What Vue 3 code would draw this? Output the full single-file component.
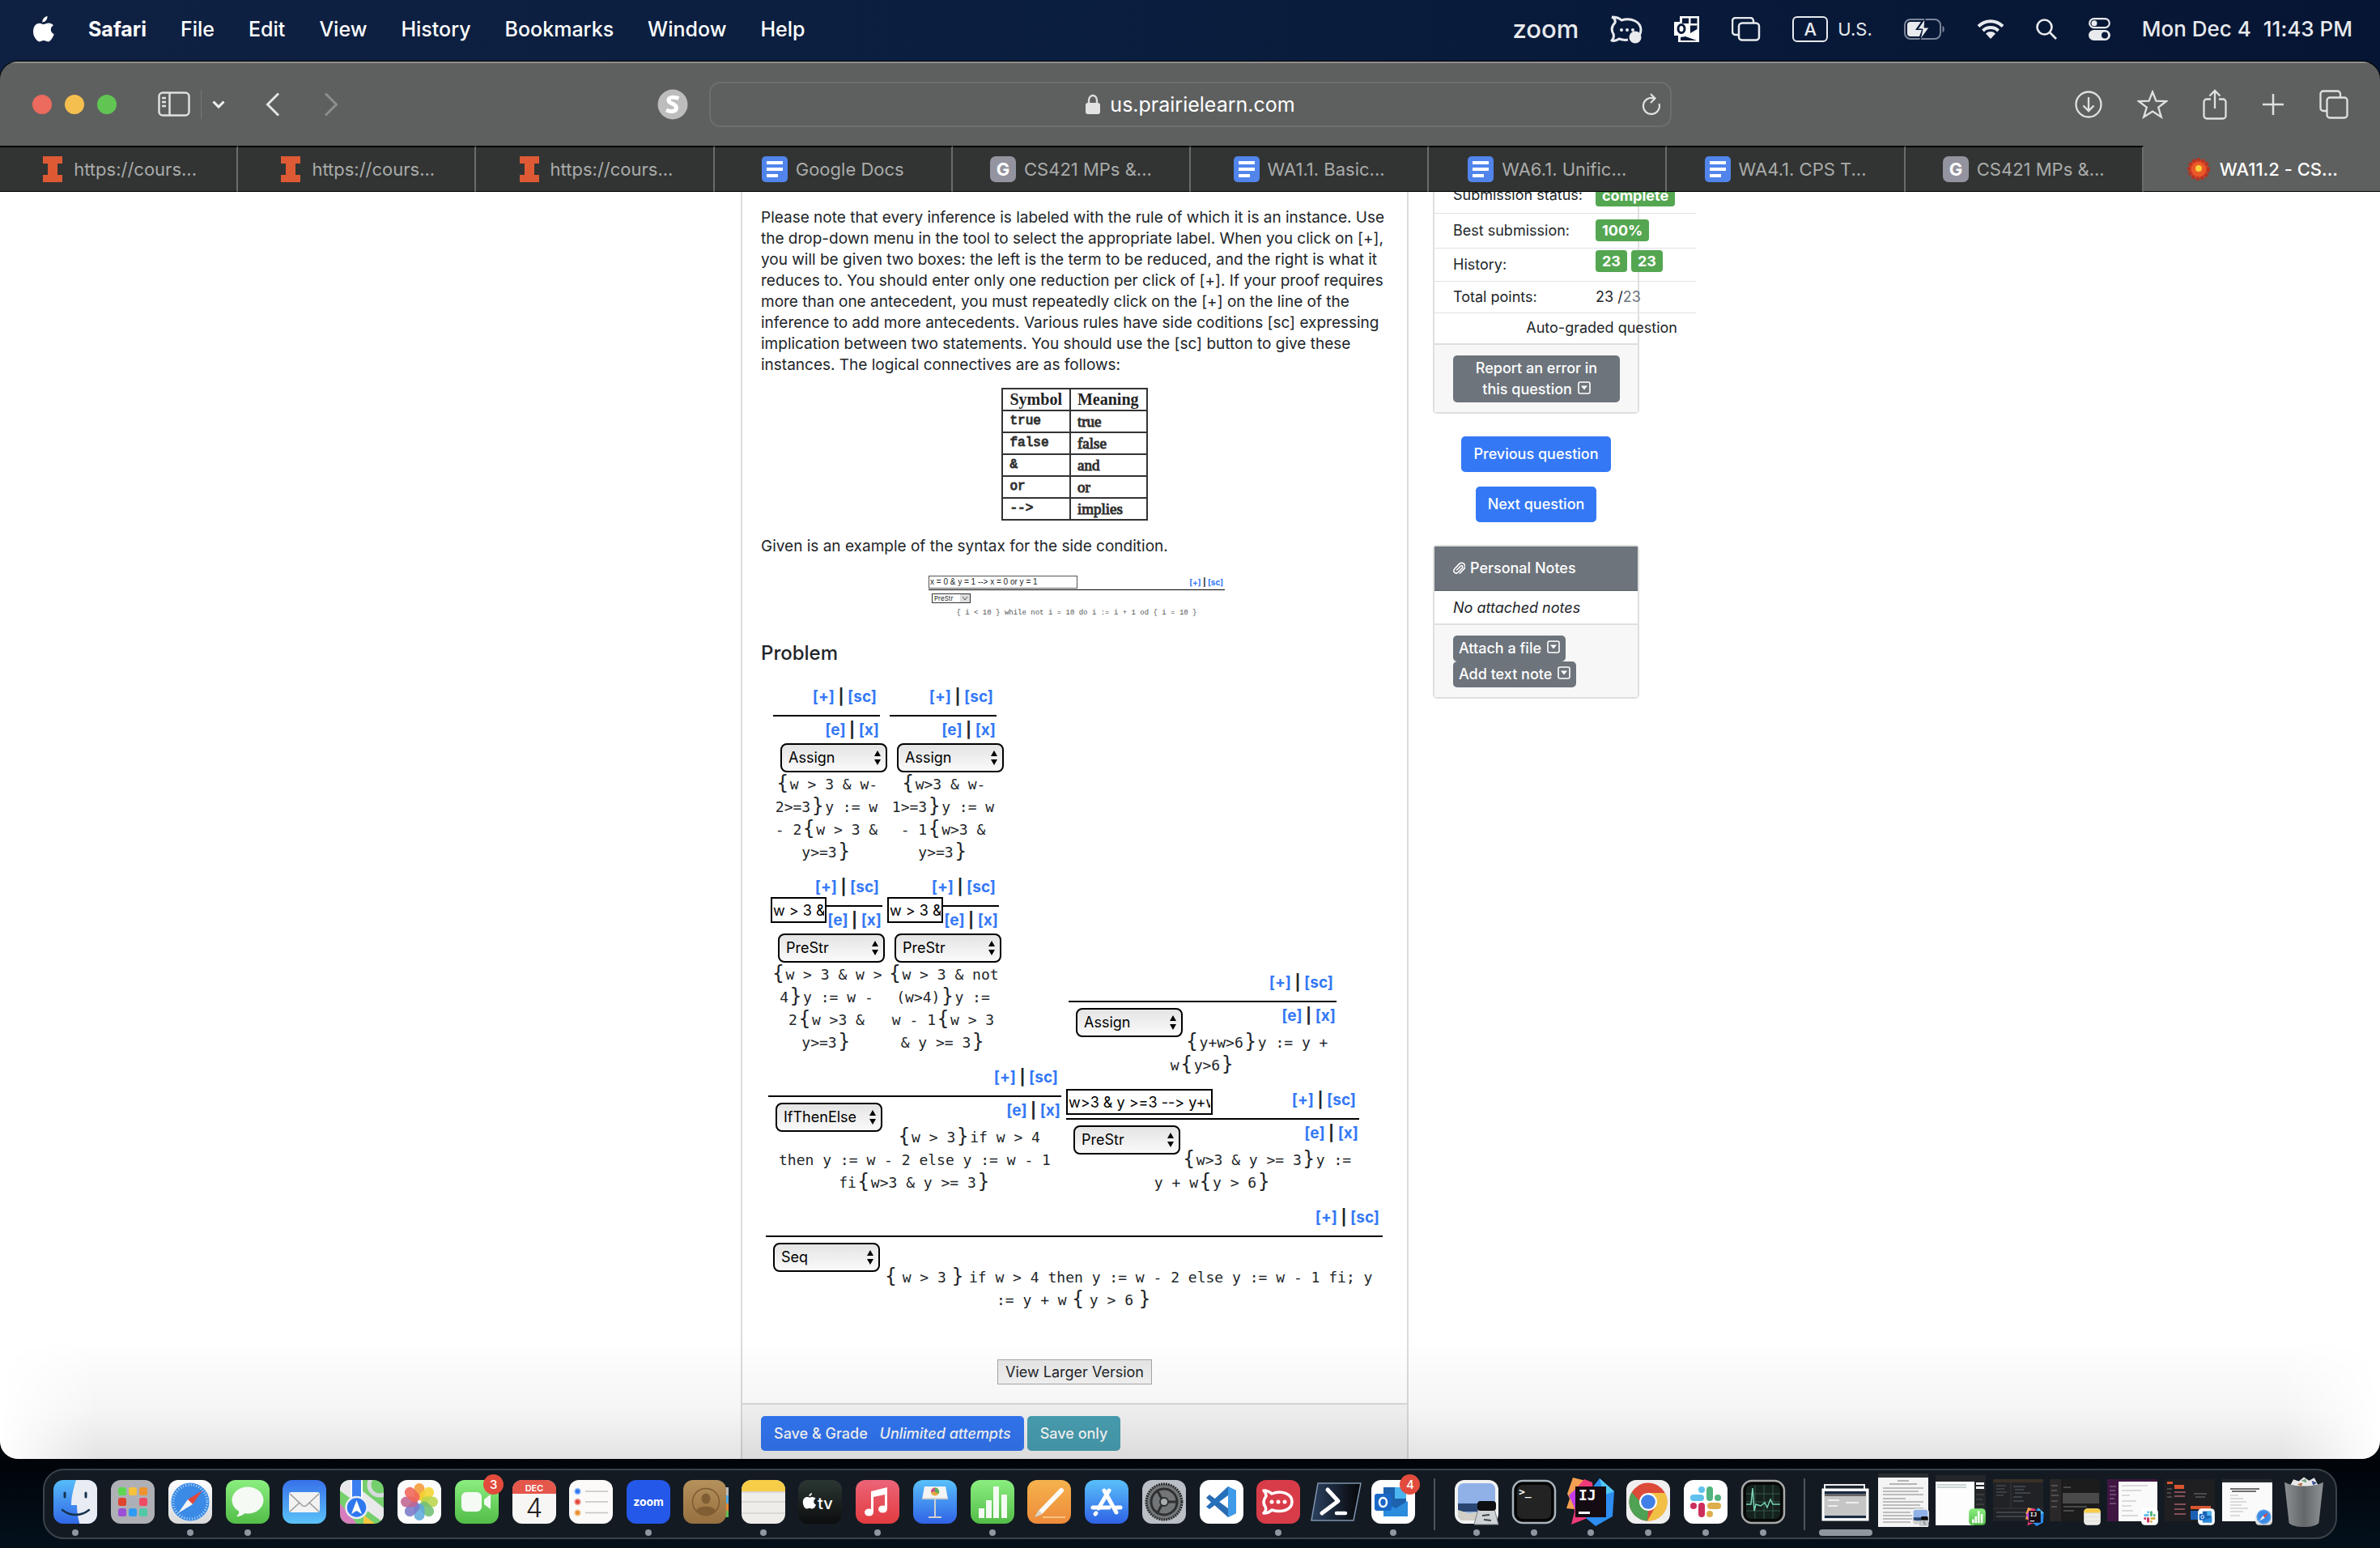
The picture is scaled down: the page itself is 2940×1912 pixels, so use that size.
<script setup>
import { h } from 'vue'

const menus = ['File', 'Edit', 'View', 'History', 'Bookmarks', 'Window', 'Help']

const tabs = [
  { icon: 'illinois', label: 'https://cours...' },
  { icon: 'illinois', label: 'https://cours...' },
  { icon: 'illinois', label: 'https://cours...' },
  { icon: 'doc', label: 'Google Docs' },
  { icon: 'g', label: 'CS421 MPs &...' },
  { icon: 'doc', label: 'WA1.1. Basic...' },
  { icon: 'doc', label: 'WA6.1. Unific...' },
  { icon: 'doc', label: 'WA4.1. CPS T...' },
  { icon: 'g', label: 'CS421 MPs &...' },
  { icon: 'flower', label: 'WA11.2 - CS...', active: true },
]

const connectives = [
  ['true', 'true'],
  ['false', 'false'],
  ['&', 'and'],
  ['or', 'or'],
  ['-->', 'implies'],
]

const proof = {
  rule: 'Seq',
  size: 'root',
  lines: ['{ w > 3 } if w > 4 then y := w - 2 else y := w - 1 fi; y', ':= y + w { y > 6 }'],
  premises: [
    {
      rule: 'IfThenElse',
      size: 'wide',
      edit: true,
      lines: ['{w > 3}if w > 4', 'then y := w - 2 else y := w - 1', 'fi{w>3 & y >= 3}'],
      premises: [
        {
          rule: 'PreStr',
          size: 'slim',
          edit: true,
          side: 'w > 3 & w > 4 --> w > 3 & w-2>=3',
          lines: ['{w > 3 & w >', '4}y := w -', '2{w >3 &', 'y>=3}'],
          premises: [
            { rule: 'Assign', size: 'slim', edit: true, lines: ['{w > 3 & w-', '2>=3}y := w', '- 2{w > 3 &', 'y>=3}'] },
          ],
        },
        {
          rule: 'PreStr',
          size: 'slim',
          edit: true,
          side: 'w > 3 & not (w>4) --> w>3 & w-1>=3',
          lines: ['{w > 3 & not', '(w>4)}y :=', 'w - 1{w > 3', '& y >= 3}'],
          premises: [
            { rule: 'Assign', size: 'slim', edit: true, lines: ['{w>3 & w-', '1>=3}y := w', '- 1{w>3 &', 'y>=3}'] },
          ],
        },
      ],
    },
    {
      rule: 'PreStr',
      size: 'wide',
      edit: true,
      side: 'w>3 & y >=3 --> y+w>6',
      lines: ['{w>3 & y >= 3}y :=', 'y + w{y > 6}'],
      premises: [
        { rule: 'Assign', size: 'wide', edit: true, lines: ['{y+w>6}y := y +', 'w{y>6}'] },
      ],
    },
  ],
}

const rules = ['Assign', 'PreStr', 'PostWeak', 'Seq', 'IfThenElse', 'While']

function link(label) {
  return h('a', { href: '#' }, label)
}

// Braces are set larger than the code around them; spaces next to a brace are narrow.
function codeLine(text) {
  return text.split(/( ?[{}] ?)/).filter(Boolean).map((part) => {
    if (!/[{}]/.test(part)) return part
    return [
      part.startsWith(' ') ? h('span', { class: 'thin' }, ' ') : null,
      h('span', { class: 'brace' }, part.trim()),
      part.endsWith(' ') ? h('span', { class: 'thin' }, ' ') : null,
    ]
  })
}

function ProofNode(props) {
  const n = props.node
  return h('div', { class: ['node', n.size] }, [
    n.premises
      ? h('div', { class: 'premises' }, n.premises.map((p) => h(ProofNode, { node: p })))
      : null,
    h('div', { class: 'head' }, [
      n.side ? h('input', { class: 'side', value: n.side, 'aria-label': 'Side condition' }) : null,
      h('div', { class: 'links' }, [link('[+]'), ' | ', link('[sc]')]),
    ]),
    h('div', { class: 'body' }, [
      n.edit ? h('div', { class: 'links edit' }, [link('[e]'), ' | ', link('[x]')]) : null,
      h('span', { class: 'pick' }, [
        h('select', { 'aria-label': 'Rule', value: n.rule },
          rules.map((r) => h('option', { value: r, selected: r === n.rule }, r))),
        h('svg', { viewBox: '0 0 8 18', width: 8, height: 18 }, [
          h('path', { d: 'M0 7L4 0L8 7ZM0 11L4 18L8 11Z' }),
        ]),
      ]),
      h('p', { class: 'code' }, n.lines.map((l, i) => [i ? h('br') : null, codeLine(l)])),
    ]),
  ])
}
ProofNode.props = ['node']

function CaretBox() {
  return h('svg', { class: 'caret', viewBox: '0 0 16 16', width: 16, height: 16 }, [
    h('rect', { x: 1, y: 1, width: 14, height: 14, rx: 2, fill: 'none', stroke: 'currentColor', 'stroke-width': 1.6 }),
    h('path', { d: 'M4 5.5H12L8 10.5Z', fill: 'currentColor' }),
  ])
}

const petals = [
  ['#f59a36', 0], ['#f4d431', 45], ['#b9d54a', 90], ['#6fbf73', 135],
  ['#5fa8dc', 180], ['#7b79c9', 225], ['#c0648f', 270], ['#f0655a', 315],
]
const pads = ['#5fd651', '#f5c23c', '#ef9230', '#e0432f', '#aab0b6', '#ee4a63', '#9a4fd6', '#2f9bf5', '#52c9a6']
const windows = [
  { kind: 'paper', badge: 'preview' },
  { kind: 'sheet', badge: 'numbers' },
  { kind: 'ide', badge: 'ij' },
  { kind: 'notes', badge: 'notes' },
  { kind: 'slack', badge: 'slack' },
  { kind: 'mail', badge: 'outlook' },
  { kind: 'essay', badge: 'safari' },
]
</script>

<template>
  <div class="screen">
    <header class="menubar">
      <nav class="menus">
        <svg class="apple" viewBox="0 0 26 32" width="26" height="32"><path fill="#fff" d="M17.5 0c.3 2-.6 4-1.700 5.300C14.600 6.700 12.900 7.600 11.300 7.500c-.2-2 .7-3.900 1.800-5.100C14.300 1 16.100.1 17.500 0ZM25 11.200c-2 1.200-3.200 3-3.200 5.300 0 2.700 1.600 4.800 4 5.700-.5 1.700-1.400 3.500-2.600 5.200-1.400 2-2.800 4-5 4-2.100 0-2.700-1.300-5.200-1.300-2.400 0-3.200 1.300-5.200 1.300-2.200 0-3.800-2.200-5.200-4.200C.7 24.600-.3 21.300.1 17.600.5 12 4 8.700 7.800 8.700c2.200 0 3.900 1.400 5.300 1.400 1.300 0 3.400-1.600 6.100-1.500 2 0 4.300.8 5.800 2.600Z"/></svg>
        <b>Safari</b>
        <span v-for="m in menus" :key="m">{{ m }}</span>
      </nav>
      <div class="status">
        <span class="zoomword">zoom</span>
        <svg viewBox="0 0 40 36" width="40" height="36"><path fill="none" stroke="#e8eaee" stroke-width="3" stroke-linejoin="round" d="M2 3c5 0 9 1 12 4 12-4 24 2 24 12 0 3-1 5-2 7M22 31c-4 1-8 0-11-1-3 2-6 3-9 2 3-3 3-5 2-8-3-5-2-10 2-14 1-3 0-5-4-7"/><g fill="#e8eaee"><circle cx="14" cy="19" r="2"/><circle cx="21" cy="19" r="2"/><circle cx="28" cy="19" r="2"/><circle cx="31" cy="28" r="7.500"/></g></svg>
        <svg viewBox="0 0 32 34" width="32" height="34"><path fill="#fff" d="M7 1H31V33H5V25H0V8H7Z"/><path fill="#081838" d="M10 3.500H28.500V17L20 22V10H10ZM8 27L14 26L28 31H8Z"/><path fill="#fff" d="M18 3H20.500V10H28.500V12.500H18Z"/><ellipse cx="9" cy="16.500" rx="4" ry="5" fill="none" stroke="#081838" stroke-width="3"/></svg>
        <svg viewBox="0 0 36 30" width="36" height="30" fill="none" stroke="#e8eaee" stroke-width="2.500"><path d="M8 22H5a4 4 0 0 1-4-4V5a4 4 0 0 1 4-4H23a4 4 0 0 1 4 4V7"/><rect x="9" y="7.500" width="25" height="21" rx="4"/></svg>
        <span class="lang"><i>A</i>U.S.</span>
        <svg viewBox="0 0 51 26" width="51" height="26"><rect x="1" y="1" width="44" height="24" rx="7" fill="none" stroke="#7c869a" stroke-width="2"/><path d="M47.500 9c3 1 3 7 0 8Z" fill="#7c869a"/><path fill="#e8eaee" d="M8 4H21L14 14H22L19 22H8a4 4 0 0 1-4-4V8a4 4 0 0 1 4-4Z"/><path fill="#e8eaee" d="M26 0L17 13H23L20 26L31 11H25Z" stroke="#081838"/></svg>
        <svg viewBox="0 0 34 26" width="34" height="26" fill="none" stroke="#e8eaee" stroke-width="4"><path d="M2 9.500a21 21 0 0 1 30 0M7.500 15a13.500 13.500 0 0 1 19 0"/><path fill="#e8eaee" stroke="none" d="M11 18.500a8.500 8.500 0 0 1 12 0L17 25Z"/></svg>
        <svg viewBox="0 0 26 26" width="26" height="26" fill="none" stroke="#e8eaee" stroke-width="2.600"><circle cx="10.500" cy="10.500" r="9"/><path d="M17 17L25 25"/></svg>
        <svg viewBox="0 0 27 28" width="27" height="28"><rect x="1.200" y="1.200" width="24.600" height="11" rx="5.500" fill="none" stroke="#e8eaee" stroke-width="2.200"/><circle cx="7" cy="6.700" r="3.500" fill="#e8eaee"/><rect y="15" width="27" height="13" rx="6.500" fill="#e8eaee"/><circle cx="20" cy="21.500" r="4" fill="#081838"/></svg>
        <span class="clock"><span>Mon Dec 4</span><span>11:43 PM</span></span>
      </div>
    </header>

    <section class="browser">
      <div class="toolbar">
        <div class="left">
          <span class="light red"></span><span class="light amber"></span><span class="light green"></span>
          <button class="tool side-tool" aria-label="Sidebar"><svg viewBox="0 0 40 32" width="40" height="32" fill="none" stroke="#dfe0df" stroke-width="2.500"><rect x="1.500" y="1.500" width="37" height="28" rx="4.500"/><path d="M14.500 1V30M5 8H10M5 13H10M5 18H10"/></svg></button>
          <span class="bar"></span>
          <button class="tool down" aria-label="Tab groups"><svg viewBox="0 0 16 10" width="16" height="10" fill="none" stroke="#f0f0f0" stroke-width="3"><path d="M1.500 1.500L8 8L14.500 1.500"/></svg></button>
          <button class="tool back" aria-label="Back"><svg viewBox="0 0 18 30" width="18" height="30" fill="none" stroke="#e4e4e4" stroke-width="3"><path d="M16 1.500L2.500 15L16 28.500"/></svg></button>
          <button class="tool fwd" aria-label="Forward"><svg viewBox="0 0 18 30" width="18" height="30" fill="none" stroke="#8c8e8d" stroke-width="3"><path d="M2 1.500L15.500 15L2 28.500"/></svg></button>
          <span class="ext"><svg viewBox="0 0 38 38" width="38" height="38"><circle cx="19" cy="19" r="18.500" fill="#bdbdbd"/><path fill="none" stroke="#fff" stroke-width="5" d="M26.500 11.500c-7-2.500-13-1.500-12.500 3 .4 3.500 9.500 4 9.500 8.500 0 5-6.500 5.500-12.500 3"/></svg></span>
        </div>
        <div class="address">
          <svg viewBox="0 0 18 26" width="18" height="26"><path d="M4 12V8a5 6 0 0 1 10 0v4" fill="none" stroke="#dcdcdc" stroke-width="2.400"/><rect y="11" width="18" height="14" rx="3" fill="#e2e2e2"/></svg>
          <span>us.prairielearn.com</span>
          <button class="tool reload" aria-label="Reload"><svg viewBox="0 0 24 28" width="24" height="28" fill="none" stroke="#dfe0df" stroke-width="2.200"><path d="M21.500 13A10 10 0 1 1 15 6.400M11 1L16.500 6.500L11 12"/></svg></button>
        </div>
        <div class="right">
          <button class="tool" aria-label="Downloads"><svg viewBox="0 0 34 34" width="34" height="34" fill="none" stroke="#dfe0df" stroke-width="2.300"><circle cx="17" cy="17" r="15.500"/><path d="M17 8V25M10.500 18.500L17 25L23.500 18.500"/></svg></button>
          <button class="tool" aria-label="Bookmark"><svg viewBox="0 0 38 36" width="38" height="36" fill="none" stroke="#dfe0df" stroke-width="2.300"><path d="M19 2.500L23.400 13.700L36 14L26.200 21.700L29.800 33.500L19 26.500L8.200 33.500L11.800 21.700L2 14L14.600 13.700Z"/></svg></button>
          <button class="tool" aria-label="Share"><svg viewBox="0 0 30 38" width="30" height="38" fill="none" stroke="#dfe0df" stroke-width="2.300"><path d="M10 12.500H5A3.500 3.500 0 0 0 1.500 16V33A3.500 3.500 0 0 0 5 36.500H25A3.500 3.500 0 0 0 28.500 33V16A3.500 3.500 0 0 0 25 12.500H20M15 24V2M8.500 8.500L15 2L21.500 8.500"/></svg></button>
          <button class="tool" aria-label="New tab"><svg viewBox="0 0 28 28" width="28" height="28" stroke="#dfe0df" stroke-width="2.500"><path d="M14 1V27M1 14H27"/></svg></button>
          <button class="tool" aria-label="Tab overview"><svg viewBox="0 0 36 36" width="36" height="36" fill="none" stroke="#dfe0df" stroke-width="2.300"><path d="M9 26H5A3.500 3.500 0 0 1 1.500 22.500V5A3.500 3.500 0 0 1 5 1.500H22.500A3.500 3.500 0 0 1 26 5V9"/><rect x="9.500" y="9.500" width="25" height="25" rx="3.500"/></svg></button>
        </div>
      </div>
      <div class="tabs">
        <button v-for="(t, i) in tabs" :key="i" class="tab" :class="{ active: t.active }">
          <svg v-if="t.icon === 'illinois'" viewBox="0 0 32 32" width="32" height="32"><path fill="#dd5a35" d="M4 0H28V9H22V23H28V32H4V23H10V9H4Z"/></svg>
          <svg v-else-if="t.icon === 'doc'" viewBox="0 0 32 32" width="32" height="32"><rect width="32" height="32" rx="5" fill="#5185ec"/><path fill="#fff" d="M6 6H26V10H6ZM6 14H26V18H6ZM6 22H20V26H6Z"/></svg>
          <svg v-else-if="t.icon === 'g'" viewBox="0 0 32 32" width="32" height="32"><rect width="32" height="32" rx="7" fill="#9494a0"/><text x="16" y="24" text-anchor="middle" font-family="Inter, sans-serif" font-weight="700" font-size="22" fill="#fff">G</text></svg>
          <svg v-else viewBox="0 0 32 32" width="32" height="32"><circle cx="16" cy="16" r="12" fill="#d8402a" stroke="#b23523" stroke-width="4" stroke-dasharray="4 2"/><circle cx="16" cy="16" r="9" fill="#ea5a26"/><circle cx="16" cy="15" r="4" fill="#f6cf3c"/></svg>
          <span>{{ t.label }}</span>
        </button>
      </div>

      <main class="page">
        <div class="layout">
          <article class="question">
            <div class="content">
              <p>Please note that every inference is labeled with the rule of which it is an instance. Use<br>the drop-down menu in the tool to select the appropriate label. When you click on [+],<br>you will be given two boxes: the left is the term to be reduced, and the right is what it<br>reduces to. You should enter only one reduction per click of [+]. If your proof requires<br>more than one antecedent, you must repeatedly click on the [+] on the line of the<br>inference to add more antecedents. Various rules have side coditions [sc] expressing<br>implication between two statements. You should use the [sc] button to give these<br>instances. The logical connectives are as follows:</p>
              <table class="connectives">
                <thead><tr><th>Symbol</th><th>Meaning</th></tr></thead>
                <tbody><tr v-for="c in connectives" :key="c[0]"><td class="sym">{{ c[0] }}</td><td>{{ c[1] }}</td></tr></tbody>
              </table>
              <p class="given">Given is an example of the syntax for the side condition.</p>
              <div class="example">
                <div class="ex-top">
                  <span class="ex-input">x = 0 &amp; y = 1 --&gt; x = 0 or y = 1</span>
                  <span class="ex-links"><i>[+]</i> | <i>[sc]</i></span>
                </div>
                <div class="ex-select"><span>PreStr</span><svg viewBox="0 0 12 10" width="12" height="10"><rect width="12" height="10" fill="#ddd"/><path d="M3 3L6 7L9 3" fill="none" stroke="#555"/></svg></div>
                <div class="ex-code">{ i &lt; 10 } while not i = 10 do i := i + 1 od { i = 10 }</div>
              </div>
              <h2>Problem</h2>
              <div class="proof"><ProofNode :node="proof" /></div>
              <button class="larger">View Larger Version</button>
            </div>
            <footer class="actions">
              <button class="btn blue">Save &amp; Grade <em>Unlimited attempts</em></button>
              <button class="btn teal">Save only</button>
            </footer>
          </article>

          <aside>
            <section class="card score">
              <table>
                <tbody>
                  <tr class="r1"><td>Submission status:</td><td><span class="badge">complete</span></td></tr>
                  <tr class="r1"><td>Best submission:</td><td><span class="badge">100%</span></td></tr>
                  <tr class="r2"><td>History:</td><td><span class="badge">23</span><span class="badge">23</span></td></tr>
                  <tr class="r3"><td>Total points:</td><td>23 /<span class="muted">23</span></td></tr>
                  <tr class="r4"><td colspan="2">Auto-graded question</td></tr>
                </tbody>
              </table>
              <div class="foot"><button class="btn gray report">Report an error in<br>this question <CaretBox /></button></div>
            </section>
            <div class="nav">
              <button class="btn blue">Previous question</button>
              <button class="btn blue">Next question</button>
            </div>
            <section class="card notes">
              <h3><svg viewBox="0 0 16 18" width="16" height="18" fill="none" stroke="#fff" stroke-width="1.600"><path d="M5 11.500L10.500 6a1.500 1.500 0 0 1 2 2.200L7 14a3 3 0 0 1-4.300-4.200L8.500 3.600a4 4 0 0 1 6 6L9 15.500"/></svg>Personal Notes</h3>
              <p>No attached notes</p>
              <div class="foot">
                <button class="btn gray">Attach a file <CaretBox /></button>
                <button class="btn gray">Add text note <CaretBox /></button>
              </div>
            </section>
          </aside>
        </div>
        <div class="shade"></div>
      </main>
    </section>

    <svg class="defs" width="0" height="0">
      <defs>
        <linearGradient id="gBlue" x2="0" y2="1"><stop stop-color="#59c0fa"/><stop offset="1" stop-color="#2f62e6"/></linearGradient>
        <linearGradient id="gMail" x2="0" y2="1"><stop stop-color="#3771ea"/><stop offset="1" stop-color="#5cc3f9"/></linearGradient>
        <linearGradient id="gGreen" x2="0" y2="1"><stop stop-color="#8bee80"/><stop offset="1" stop-color="#52bd47"/></linearGradient>
        <linearGradient id="gRed" x2="0" y2="1"><stop stop-color="#ec6478"/><stop offset="1" stop-color="#e23b3f"/></linearGradient>
        <linearGradient id="gOrange" x2="0" y2="1"><stop stop-color="#f5b24d"/><stop offset="1" stop-color="#ee8b3a"/></linearGradient>
        <linearGradient id="gWhite" x2="0" y2="1"><stop stop-color="#fff"/><stop offset="1" stop-color="#d9d9d9"/></linearGradient>
        <linearGradient id="gBrown" x2="0" y2="1"><stop stop-color="#b5915c"/><stop offset="1" stop-color="#96703f"/></linearGradient>
        <linearGradient id="gTv" x2="0" y2="1"><stop stop-color="#2b3733"/><stop offset="1" stop-color="#0c0d0e"/></linearGradient>
        <linearGradient id="gPs" x1="0" y1="0" x2="1" y2="0"><stop stop-color="#2c4160"/><stop offset="1" stop-color="#050607"/></linearGradient>
        <linearGradient id="gCan" x2="1" y2="0"><stop stop-color="#8c9092"/><stop offset=".5" stop-color="#63676a"/><stop offset="1" stop-color="#8e9294"/></linearGradient>
        <clipPath id="tile"><rect x="3" y="3" width="54" height="54" rx="12"/></clipPath>
        <symbol id="i-safari" viewBox="0 0 60 60"><rect x="3" y="3" width="54" height="54" rx="12" fill="url(#gWhite)"/><circle cx="30" cy="30" r="23.500" fill="#3a8ae6"/><circle cx="30" cy="30" r="21" fill="none" stroke="#b9d9f7" stroke-width="3" stroke-dasharray="1 2.300"/><path d="M45 16L33 33L27 27Z" fill="#e2473c"/><path d="M15 44L27 27L33 33Z" fill="#f3f3f3"/></symbol>
        <symbol id="i-notes" viewBox="0 0 60 60"><g clip-path="url(#tile)"><rect width="60" height="60" fill="#efedea"/><rect width="60" height="17" fill="#f7cd48"/><path d="M0 18H60M0 30H60M0 44H60" stroke="#c5c3bf"/></g></symbol>
        <symbol id="i-numbers" viewBox="0 0 60 60"><rect x="3" y="3" width="54" height="54" rx="12" fill="url(#gGreen)"/><path fill="#f4fbf3" d="M13 38h7v12h-7ZM22 28h7v22h-7ZM31 11h7v39h-7ZM41 21h7v29h-7Z"/></symbol>
        <symbol id="i-outlook" viewBox="0 0 60 60"><rect x="3" y="3" width="54" height="54" rx="12" fill="#fff"/><path fill="#1c62ad" d="M18 12H46V48H18Z"/><path fill="#4cb4ee" d="M32 12H46V26H32Z"/><path fill="#2b8bdd" d="M18 29L33 38L48 29V48H18Z"/><rect x="7" y="20" width="21" height="21" rx="3" fill="#1a68c6"/><ellipse cx="17.500" cy="30.500" rx="4.500" ry="5.500" fill="none" stroke="#fff" stroke-width="2.500"/></symbol>
        <symbol id="i-slack" viewBox="0 0 60 60"><rect x="3" y="3" width="54" height="54" rx="12" fill="#fff"/><g stroke-width="8" stroke-linecap="round"><path stroke="#60c1ec" d="M15 25H24M25 15V15.100"/><path stroke="#51b37e" d="M35 15V25M45 25V25.100"/><path stroke="#ddae4b" d="M36 35H45M35 45V45.100"/><path stroke="#cc2f5b" d="M25 35V45M15 35V35.100"/></g></symbol>
        <symbol id="i-ij" viewBox="0 0 60 60"><path fill="#f4a052" d="M8 0L24 4L18 40L0 38L4 26L1 20Z"/><path fill="#ee3a78" d="M8 18L22 2L32 6L36 46L6 58L10 42Z"/><path fill="#c23bea" d="M3 22L16 10L14 46Z"/><path fill="#2d8df0" d="M41 1L59 17L57 48L36 60L24 50L34 10Z"/><path fill="#53c8f7" d="M41 1L59 17L46 22Z"/><rect x="11" y="11" width="38" height="38" fill="#150b12"/><text x="15" y="28" font-family="'DejaVu Sans Mono', monospace" font-weight="700" font-size="18" fill="#fff">IJ</text><path fill="#fff" d="M15 42H29V45H15Z"/></symbol>
        <symbol id="i-preview" viewBox="0 0 60 60"><rect x="3" y="3" width="54" height="54" rx="12" fill="#f2f2f2"/><rect x="7" y="7" width="46" height="46" rx="7" fill="#8fb1e8"/><path fill="#2b4573" d="M7 32H53V42H7Z"/><path fill="#d2cfc6" d="M7 40L20 44L53 40V46a7 7 0 0 1-7 7H14a7 7 0 0 1-7-7Z"/><path fill="#cdd3d6" stroke="#787f84" d="M32 39H52L57 58H27Z"/><rect x="31" y="29" width="23" height="12" rx="4" fill="#0e0f10"/><path stroke="#444" stroke-width="2" d="M37 47L46 46M39 52L48 53"/></symbol>
      </defs>
    </svg>

    <footer class="desktop">
      <div class="dock">
        <div class="app run"><svg viewBox="0 0 60 60"><g clip-path="url(#tile)"><rect width="60" height="60" fill="url(#gBlue)"/><path fill="#e9edf3" d="M32 0C28 12 25 24 25 34H32C32 44 34 52 36 60H60V0Z"/></g><path d="M17 19V24M43 19V24" stroke="#17334f" stroke-width="3" stroke-linecap="round"/><path d="M14 40C24 48 37 48 47 40" fill="none" stroke="#17334f" stroke-width="2.500" stroke-linecap="round"/></svg></div>
        <div class="app"><svg viewBox="0 0 60 60"><rect x="3" y="3" width="54" height="54" rx="12" fill="#aeb0b6"/><rect v-for="(c, i) in pads" :key="i" :x="12 + (i % 3) * 13" :y="12 + Math.floor(i / 3) * 13" width="10" height="10" rx="2.500" :fill="c"/></svg></div>
        <div class="app run"><svg viewBox="0 0 60 60"><use href="#i-safari"/></svg></div>
        <div class="app run"><svg viewBox="0 0 60 60"><rect x="3" y="3" width="54" height="54" rx="12" fill="url(#gGreen)"/><ellipse cx="30" cy="28" rx="19.500" ry="16.500" fill="#f5faf5"/><path fill="#f5faf5" d="M19 40C20 44 18 46 16 48C21 48 25 46 27 43Z"/></svg></div>
        <div class="app"><svg viewBox="0 0 60 60"><rect x="3" y="3" width="54" height="54" rx="12" fill="url(#gMail)"/><rect x="11" y="18" width="38" height="25" rx="3" fill="#f2f2f2"/><path d="M12 20L27 34Q30 37 33 34L48 20M12 42L24 31M48 42L36 31" fill="none" stroke="#9a9a9a" stroke-width="1.500"/></svg></div>
        <div class="app"><svg viewBox="0 0 60 60"><g clip-path="url(#tile)"><rect width="60" height="60" fill="#76cf6d"/><path fill="#e9e9ec" d="M0 14L60 58V40L30 16V0H0Z"/><path fill="#d77dbd" d="M0 28L26 60H0Z"/><path fill="#f3c841" d="M32 46L50 60H32Z"/><rect x="17" width="13" height="36" fill="#3a7ef0" stroke="#fff" stroke-width="2"/><circle cx="52" cy="9" r="13" fill="none" stroke="#d7dadd" stroke-width="5"/></g><circle cx="23.500" cy="37" r="13" fill="#2e77ee" stroke="#e9eef8" stroke-width="2.500"/><path fill="#fff" d="M23.500 28L30 45L23.500 41L17 45Z"/></svg></div>
        <div class="app"><svg viewBox="0 0 60 60"><rect x="3" y="3" width="54" height="54" rx="12" fill="#fcfcfc"/><rect v-for="p in petals" :key="p[1]" x="23.500" y="7" width="13" height="21" rx="6.500" :fill="p[0]" opacity=".88" :transform="`rotate(${p[1]} 30 30)`"/></svg></div>
        <div class="app"><svg viewBox="0 0 60 60"><rect x="3" y="3" width="54" height="54" rx="12" fill="url(#gGreen)"/><rect x="11" y="18" width="25" height="24" rx="6" fill="#f5faf5"/><path fill="#f5faf5" d="M39 27L47 21V39L39 33Z"/></svg><b class="count">3</b></div>
        <div class="app"><svg viewBox="0 0 60 60"><g clip-path="url(#tile)"><rect width="60" height="60" fill="#f8f6f4"/><rect width="60" height="20" fill="#e5564b"/></g><text x="30" y="17" text-anchor="middle" font-family="Inter, sans-serif" font-weight="600" font-size="11" fill="#fff">DEC</text><text x="30" y="49" text-anchor="middle" font-family="Inter, sans-serif" font-weight="300" font-size="33" fill="#222">4</text></svg></div>
        <div class="app"><svg viewBox="0 0 60 60"><rect x="3" y="3" width="54" height="54" rx="12" fill="#fbfaf8"/><g stroke="#c4c4c4" stroke-width="1.500"><path d="M23 17H51M23 30H51M23 43.500H51"/></g><g stroke-width="1.500"><circle cx="13.500" cy="17" r="3.500" fill="#3478f0" stroke="#9fc0fa"/><circle cx="13.500" cy="30" r="3.500" fill="#e2493c" stroke="#f3a9a3"/><circle cx="13.500" cy="43.500" r="3.500" fill="#ea9236" stroke="#f5cfa2"/></g></svg></div>
        <div class="app run"><svg viewBox="0 0 60 60"><rect x="3" y="3" width="54" height="54" rx="12" fill="#2458e8"/><text x="30" y="34.500" text-anchor="middle" font-family="Inter, sans-serif" font-weight="700" font-size="14" fill="#fff">zoom</text></svg></div>
        <div class="app"><svg viewBox="0 0 60 60"><path d="M54 12h4v10h-4Z" fill="#bbb"/><path d="M54 22h4v10h-4Z" fill="#4fa8e0"/><path d="M54 32h4v9h-4Z" fill="#e88a35"/><path d="M54 41h4v8h-4Z" fill="#5cbf57"/><rect x="2" y="3" width="53" height="54" rx="12" fill="url(#gBrown)"/><circle cx="30" cy="30" r="16.500" fill="none" stroke="#7c5a31" stroke-width="1.500"/><ellipse cx="30" cy="26" rx="5.500" ry="6.500" fill="#805d33"/><path d="M18 41C21 34 39 34 42 41A16 16 0 0 1 18 41Z" fill="#805d33"/></svg></div>
        <div class="app run"><svg viewBox="0 0 60 60"><use href="#i-notes"/></svg></div>
        <div class="app"><svg viewBox="0 0 60 60"><rect x="3" y="3" width="54" height="54" rx="12" fill="url(#gTv)"/><path fill="#fff" d="M20 19c.2 2-1.600 4.200-3.600 4.100-.2-2 1.700-4 3.600-4.100ZM24.500 26c-3.400 2-2.800 6.400.6 7.600-1 2.500-2.600 5-4.500 5-1.500 0-2-.8-3.600-.8s-2.200.8-3.600.8c-2.200 0-4.600-4.200-4.600-8 0-7 6-7.400 8.400-5.800 3-1.400 5.800-.6 7.300 1.200Z"/><text x="27" y="38.500" font-family="Inter, sans-serif" font-weight="500" font-size="20" fill="#fff">tv</text></svg></div>
        <div class="app run"><svg viewBox="0 0 60 60"><rect x="3" y="3" width="54" height="54" rx="12" fill="url(#gRed)"/><path fill="#fff" d="M22 17L42 12V38H39V21L25 24V43H22Z"/><ellipse cx="19.500" cy="43" rx="5.500" ry="4.500" fill="#fff"/><ellipse cx="36.500" cy="39" rx="5.500" ry="4.500" fill="#fff"/></svg></div>
        <div class="app"><svg viewBox="0 0 60 60"><rect x="3" y="3" width="54" height="54" rx="12" fill="url(#gBlue)"/><path fill="#f4f4f4" d="M17 11H43L46 27H14Z"/><path fill="#d0d0d0" d="M14 25H46V27H14ZM29 27H31V48H29ZM22 48H38V50H22Z"/><circle cx="30" cy="17.500" r="5" fill="#e8a33c"/><path d="M30 17.500V12.500A5 5 0 0 1 34.500 20Z" fill="#58b058"/><path d="M30 17.500L25 18A5 5 0 0 1 30 12.500Z" fill="#c65390"/></svg></div>
        <div class="app run"><svg viewBox="0 0 60 60"><use href="#i-numbers"/></svg></div>
        <div class="app"><svg viewBox="0 0 60 60"><rect x="3" y="3" width="54" height="54" rx="12" fill="url(#gOrange)"/><path d="M45 16L20 42" stroke="#fafafa" stroke-width="6" stroke-linecap="round"/><path fill="#d9d4cc" d="M17 40L22 45L12 49Z"/><path d="M22 49H50" stroke="#fbd49f" stroke-width="1.500"/></svg></div>
        <div class="app"><svg viewBox="0 0 60 60"><rect x="3" y="3" width="54" height="54" rx="12" fill="url(#gBlue)"/><g stroke="#fff" stroke-width="5" stroke-linecap="round"><path d="M33 16L20 38M27 16L42 43M13 37H33M42 37H47M17 44L16 45"/></g></svg></div>
        <div class="app"><svg viewBox="0 0 60 60"><rect x="3" y="3" width="54" height="54" rx="12" fill="#b9bfc4"/><circle cx="30" cy="30" r="22" fill="#737678" stroke="#2a2b2c" stroke-width="3" stroke-dasharray="2 1"/><circle cx="30" cy="30" r="16" fill="none" stroke="#2e3031" stroke-width="3"/><circle cx="30" cy="30" r="5" fill="#a9adb0" stroke="#2e3031" stroke-width="2"/><path d="M35 30H47M27 26L21 15M27 34L21 45" stroke="#2e3031" stroke-width="3"/></svg></div>
        <div class="app"><svg viewBox="0 0 60 60"><rect x="3" y="3" width="54" height="54" rx="12" fill="#fff"/><path fill="#2a6cb2" d="M38 11L48 16V44L38 49L11 25L15 21L38 38Z"/><path fill="#2470ba" d="M38 22L15 39L11 36L38 11Z"/><path fill="#3f9ae8" d="M38 11L48 16V44L38 49Z"/></svg></div>
        <div class="app run"><svg viewBox="0 0 60 60"><rect x="3" y="3" width="54" height="54" rx="12" fill="#d93c49"/><path fill="none" stroke="#fff" stroke-width="3.500" stroke-linejoin="round" d="M12 16C17 16 20 18 22 20C34 15 47 20 47 30S34 44 22 40C19 43 16 44 12 44C15 41 15 38 14 36C11 32 12 27 15 23C15 20 14 18 12 16Z"/><g fill="#fff"><circle cx="22" cy="30" r="2.500"/><circle cx="30" cy="30" r="2.500"/><circle cx="38" cy="30" r="2.500"/></g></svg></div>
        <div class="app"><svg viewBox="0 0 60 60" overflow="visible"><path d="M8 7H61L52 53H0Z" fill="url(#gPs)" stroke="#7d93ad" stroke-width="1.500"/><path d="M20 15L33 29L13 44" fill="none" stroke="#fff" stroke-width="5" stroke-linecap="round" stroke-linejoin="round"/><path d="M31 44H42" stroke="#fff" stroke-width="4.500" stroke-linecap="round"/></svg></div>
        <div class="app run"><svg viewBox="0 0 60 60"><use href="#i-outlook"/></svg><b class="count">4</b></div>
        <span class="split"></span>
        <div class="app run"><svg viewBox="0 0 60 60"><use href="#i-preview"/></svg></div>
        <div class="app run"><svg viewBox="0 0 60 60"><rect x="4" y="4" width="52" height="52" rx="12" fill="#050505" stroke="#a9b3bb" stroke-width="2.500"/><rect x="9" y="9" width="42" height="42" rx="7" fill="#232323"/><text x="11" y="22" font-family="'DejaVu Sans Mono', monospace" font-weight="700" font-size="13" fill="#fff">&gt;_</text></svg></div>
        <div class="app run"><svg viewBox="0 0 60 60"><use href="#i-ij"/></svg></div>
        <div class="app run"><svg viewBox="0 0 60 60"><rect x="3" y="3" width="54" height="54" rx="12" fill="#efefef"/><circle cx="30" cy="30" r="23.500" fill="#dc4a3a"/><path fill="#4fa153" d="M9.600 18.300L30 40.500L29 53.500A23.500 23.500 0 0 1 9.600 18.300Z"/><path fill="#f2c044" d="M30 19H51A23.500 23.500 0 0 1 29 53.500L39.500 35Z"/><circle cx="30" cy="30" r="11" fill="#fff"/><circle cx="30" cy="30" r="8.800" fill="#3f7fe8"/></svg></div>
        <div class="app run"><svg viewBox="0 0 60 60"><use href="#i-slack"/></svg></div>
        <div class="app run"><svg viewBox="0 0 60 60"><rect x="4" y="4" width="52" height="52" rx="12" fill="#060807" stroke="#a9a9a9" stroke-width="2.500"/><rect x="9" y="9" width="42" height="42" rx="6" fill="#14211d"/><path d="M9 20H51M9 30H51M9 41H51M20 9V51M31 9V51M42 9V51" stroke="#34584e" stroke-width="1"/><path d="M9 33H15L17 13L19 41L21 33L27 35L32 31L35 37L39 27L42 33H51" fill="none" stroke="#79d3b4" stroke-width="1.500"/></svg></div>
        <span class="split"></span>
        <div class="app stack"><svg viewBox="0 0 60 60"><rect x="4" y="9" width="49" height="20" fill="#1c2630" stroke="#eee" stroke-width="2"/><rect x="2" y="15" width="55" height="37" fill="#c5c5c5" stroke="#fff" stroke-width="3"/><path fill="#1a2a44" d="M4 17H55V20H4ZM4 47H55V50H4Z"/><path fill="#666" d="M4 20H55V23H4Z"/><path d="M8 28H22M30 31H46M8 35H20" stroke="#eee" stroke-width="2"/></svg></div>
        <div v-for="w in windows" :key="w.kind" class="app mini">
          <svg v-if="w.kind === 'paper'" viewBox="0 0 62 66"><rect width="62" height="66" fill="#f4f4f4"/><rect width="62" height="5" fill="#2a2e33"/><path d="M24 9H38M14 13H48" stroke="#777"/><path d="M6 18H56M6 22H50M6 26H56M6 31H34M6 35H56M6 39H52M6 43H56M6 48H40M6 52H56M6 56H48M6 60H40" stroke="#aaa" stroke-width="1.500"/></svg>
          <svg v-else-if="w.kind === 'sheet'" viewBox="0 0 62 62"><rect width="62" height="62" fill="#23272a"/><path fill="#fdfdfd" d="M0 8H48V62H0ZM50 9h10v3H50ZM50 14h10v3H50Z"/><path d="M2 12H38M2 15H38" stroke="#9aa"/><path d="M50 24H60M50 30H58M50 36H60M50 42H58" stroke="#555"/></svg>
          <svg v-else-if="w.kind === 'ide'" viewBox="0 0 62 52"><rect width="62" height="52" fill="#202226"/><rect width="62" height="4" fill="#3a3026"/><path d="M22 4V36M0 36H62" stroke="#34373c"/><path d="M4 8H16M4 12H14M4 16H17M4 20H13" stroke="#555a60"/><path d="M25 9H40M27 13H38M27 17H46M25 22H36M25 27H38M4 41H56M4 46H50" stroke="#5d6470"/></svg>
          <svg v-else-if="w.kind === 'notes'" viewBox="0 0 62 52"><rect width="62" height="52" fill="#1d1c1c"/><rect width="14" height="52" fill="#2a2828"/><rect x="16" y="17" width="45" height="13" fill="#4b4a4a"/><path d="M2 8H10M2 14H9M2 20H11M2 27H10M2 34H9M17 10H26M17 34H46M17 39H30" stroke="#777"/></svg>
          <svg v-else-if="w.kind === 'slack'" viewBox="0 0 62 52"><rect width="62" height="52" fill="#fafafa"/><rect width="14" height="52" fill="#3f1642"/><rect width="62" height="3" fill="#3f1642"/><path d="M3 9H11M3 14H10M3 19H11M3 24H9M3 30H11" stroke="#9b7b9e"/><path d="M18 8H50M18 14H42M18 20H28M18 27H36M18 33H30M18 39H32M18 45H38" stroke="#bbb"/></svg>
          <svg v-else-if="w.kind === 'mail'" viewBox="0 0 62 52"><rect width="62" height="52" fill="#1f1f21"/><path fill="#d9552f" d="M3 3h7v3H3ZM12 7h12v5H12ZM32 33H57V37H32Z"/><path fill="#1c5fb5" d="M32 39H57V50H32Z"/><path d="M12 16H26M12 21H25M12 31H26M12 37H25M12 43H26" stroke="#a5606b" stroke-width="1.500"/><path d="M3 12H9M3 17H8M3 22H9M36 18H52M38 22H50" stroke="#777"/></svg>
          <svg v-else viewBox="0 0 62 52"><rect width="62" height="52" fill="#fafafa"/><rect width="62" height="4" fill="#25282b"/><path d="M10 12H46M12 15H42" stroke="#444" stroke-width="1.500"/><path d="M10 20H20M10 24H26M10 28H30M10 32H24M10 36H32M10 40H26M10 45H22" stroke="#bbb"/></svg>
          <svg class="chip" viewBox="0 0 60 60"><use :href="'#i-' + w.badge"/></svg>
        </div>
        <div class="app trash"><svg viewBox="0 0 60 90" preserveAspectRatio="none"><path fill="#e8e8e8" d="M8 18L14 6L22 9L30 2L38 8L46 3L52 16L50 24H12Z"/><path fill="#6fa37d" d="M26 8L33 5L34 12Z"/><path fill="#374d8f" d="M42 8L50 12L44 16Z"/><path fill="#b9653b" d="M20 14L28 12L26 18Z"/><path d="M0 11C14 20 46 20 60 11L53 82C46 91 14 91 7 82Z" fill="url(#gCan)"/></svg></div>
      </div>
    </footer>
  </div>
</template>

<style>
html, body { margin: 0; background: #02070d; }
</style>

<style scoped>
.screen {
  min-height: 100vh;
  display: flex;
  flex-direction: column;
  overflow: hidden;
  font-family: Inter, "Noto Sans", sans-serif;
  font-size: 18px;
  line-height: 26px;
  font-variant-ligatures: no-contextual;
  color: #212529;
  background: linear-gradient(90deg, #0f2142, #0a1e3f 45%, #061533) top / 100% 120px no-repeat, #02070d;
}
button, select, input { font: inherit; color: inherit; }
button { border: 0; padding: 0; background: none; cursor: pointer; }
a { color: #3478f6; text-decoration: none; }
svg { display: block; flex: none; }
.defs { position: absolute; }

/* menu bar */
.menubar {
  height: 76px;
  box-sizing: border-box;
  padding: 0 34px 5px 41px;
  display: flex;
  align-items: center;
  justify-content: space-between;
  color: #fff;
  font-size: 25px;
  font-weight: 500;
  white-space: pre;
}
.menus { display: flex; align-items: center; gap: 42px; }
.menus b { font-weight: 700; }
.status { display: flex; align-items: center; gap: 39px; color: #e8eaee; }
.zoomword { font-size: 31px; font-weight: 500; }
.lang { display: flex; align-items: center; gap: 12px; font-size: 22px; font-weight: 400; }
.lang i {
  width: 40px; height: 28px; line-height: 28px;
  border: 2px solid #e8eaee; border-radius: 6px;
  text-align: center; font-style: normal; font-weight: 500;
}
.clock { display: flex; gap: 15px; font-size: 26px; }

/* browser window */
.browser {
  flex: 1;
  display: flex;
  flex-direction: column;
  border-radius: 22px;
  overflow: hidden;
  background: #5e605f;
  box-shadow: 0 0 0 1px #000;
}
.toolbar {
  height: 104px;
  box-sizing: border-box;
  border-top: 2px solid #8f8f8f;
  display: flex;
  align-items: center;
}
.left { flex: 1; display: flex; align-items: center; padding-left: 40px; }
.light { width: 24px; height: 24px; border-radius: 50%; margin-right: 16px; }
.red { background: #ed6a5e; }
.amber { background: #f5bf4f; }
.green { background: #61c554; }
.side-tool { margin-left: 35px; }
.bar { width: 1px; height: 36px; margin: 0 13px; background: #757776; }
.back { margin-left: 50px; }
.fwd { margin-left: 54px; }
.ext { margin-left: auto; margin-right: 26px; }
.address {
  position: relative;
  width: 1189px;
  height: 56px;
  box-sizing: border-box;
  border: 2px solid #6d6f6e;
  border-radius: 14px;
  display: flex;
  align-items: center;
  justify-content: center;
  gap: 12px;
  color: #fff;
  font-size: 25px;
}
.reload { position: absolute; right: 11px; }
.right { flex: 1; display: flex; align-items: center; justify-content: flex-end; gap: 43px; padding-right: 39px; }
.tabs { display: flex; height: 57px; }
.tab {
  flex: 1;
  display: flex;
  align-items: center;
  justify-content: center;
  gap: 10px;
  background: #323433;
  color: #a9abaa;
  font-size: 22px;
  border-top: 2px solid #000;
  border-bottom: 1px solid #000;
  border-right: 2px solid #6a6c6b;
}
.tab.active { background: #5e605f; color: #fff; font-weight: 500; border-top-color: #5e605f; border-right: 0; }

/* page */
.page { position: relative; flex: 1; background: #fff; overflow: hidden; display: flex; justify-content: center; }
.shade {
  position: absolute;
  inset: auto 0 0 0;
  height: 150px;
  background: linear-gradient(rgba(0, 0, 0, 0), rgba(0, 0, 0, .04) 60%, rgba(0, 0, 0, .11));
  mask-image: linear-gradient(90deg, transparent, #000 120px, #000 calc(100% - 120px), transparent);
  pointer-events: none;
}
.layout { display: flex; gap: 30px; width: 1110px; }
.question {
  width: 825px;
  box-sizing: border-box;
  border: 2px solid #dcdcdc;
  border-width: 0 2px;
  display: flex;
  flex-direction: column;
}
.content { padding: 19px 23px 23px; display: flex; flex-direction: column; }
p { margin: 0; white-space: nowrap; }
.content > p { font-size: 19px; }
.connectives {
  margin: 15px auto 0;
  border-collapse: collapse;
  font-family: "Liberation Serif", serif;
  font-size: 19px;
  line-height: 25px;
  color: #222;
}
.connectives th, .connectives td { height: 25px; padding: 0 9px 0 8px; border: 2px solid #333; text-align: left; -webkit-text-stroke: 1px #333; }
.connectives th { font-weight: 700; font-size: 20px; -webkit-text-stroke: 0; }
.connectives .sym { font-family: "Liberation Mono", monospace; font-size: 16px; }
.given { margin-top: 19px; }
.example { width: 366px; margin: 23px 0 0 207px; font-size: 10px; line-height: 14px; }
.ex-top { display: flex; justify-content: space-between; align-items: center; border-bottom: 1px solid #000; padding-bottom: 1px; }
.ex-input { width: 180px; border: 1px solid #555; padding: 0 1px; font-family: "Liberation Sans", sans-serif; }
.ex-links { font-weight: 700; padding-right: 2px; }
.ex-links i { font-style: normal; color: #3478f6; }
.ex-select { width: 44px; height: 10px; margin: 4px 0 0 4px; border: 1px solid #333; display: flex; justify-content: space-between; line-height: 10px; font-size: 8px; padding-left: 2px; }
.ex-code { margin: 5px 0 0; text-align: center; font-family: "Liberation Mono", monospace; font-size: 9px; color: #555; white-space: nowrap; }
h2 { margin: 29px 0 0; font-size: 24px; line-height: 28px; font-weight: 500; }

/* proof tree */
.proof { margin: 11px 0 0 6px; width: 762px; }
.proof :deep(.node) { position: relative; }
.proof :deep(.wide) { width: 362px; }
.proof :deep(.wide .wide) { width: 331px; }
.proof :deep(.slim) { width: 138px; }
.proof :deep(.slim .slim) { width: 132px; }
.proof :deep(.premises) { display: flex; align-items: flex-end; gap: 6px; padding-left: 3px; }
.proof :deep(.head) {
  position: relative;
  height: 51px;
  border-bottom: 2px solid #000;
  display: flex;
  align-items: flex-end;
  justify-content: flex-end;
}
.proof :deep(.links) { white-space: pre; font-size: 19px; font-weight: 700; padding: 0 4px 9px 0; }
.proof :deep(a) { color: #3478f6; text-decoration: none; }
.proof :deep(.side) {
  width: 181px;
  height: 32px;
  box-sizing: border-box;
  margin: 0 auto 4px 0;
  padding: 0 1px;
  border: 2px solid #000;
  background: #fff;
  color: #000;
  font: inherit;
  font-variant-ligatures: no-contextual;
}
.proof :deep(.slim > .head > .side) { position: absolute; z-index: 1; left: 0; top: 41px; width: 69px; margin: 0; }
.proof :deep(.body) { display: flow-root; text-align: center; }
.proof :deep(.edit) { float: right; padding: 4px 1px 0 0; }
.proof :deep(.pick) { position: relative; float: left; margin: 7px -8px 0 9px; width: 132px; height: 36px; }
.proof :deep(.slim > .body > .pick) { clear: right; margin-top: 3px; margin-right: -20px; }
.proof :deep(select) {
  appearance: none;
  width: 100%;
  height: 100%;
  box-sizing: border-box;
  padding: 0 8px;
  border: 2px solid #000;
  border-radius: 8px;
  background: linear-gradient(#e4e4e4, #fafafa);
  color: #000;
  font: inherit;
}
.proof :deep(.pick svg) { position: absolute; right: 8px; top: 9px; pointer-events: none; }
.proof :deep(.code) {
  margin: 0;
  padding-top: 36px;
  font-family: "DejaVu Sans Mono", monospace;
  font-size: 18px;
  line-height: 28px;
  white-space: nowrap;
}
.proof :deep(.slim > .body > .code) { padding-top: 70px; }
.proof :deep(.brace) { display: inline-block; width: 18px; font-size: 24px; line-height: 20px; text-align: center; }
.proof :deep(.thin) { font-family: Inter, sans-serif; }
.larger {
  align-self: center;
  margin-top: 59px;
  height: 31px;
  padding: 0 9px;
  border: 1px solid #a6a6a6;
  background: linear-gradient(#e6e6e6, #f4f4f4);
}

/* buttons and cards */
.actions { flex: 1; display: flex; align-items: flex-start; gap: 4px; padding: 14px 23px 8px; border-top: 2px solid #dadada; background: #f7f7f7; }
.btn { color: #fff; font-weight: 500; border-radius: 5px; white-space: nowrap; }
.blue { background: #3478f6; }
.teal { background: #4aa2b5; }
.gray { background: #6d747c; }
.actions .btn { height: 43px; padding: 0 16px; }
.actions em { margin-left: 10px; }
aside { width: 255px; }
.card { border: 2px solid #dfdfdf; border-radius: 5px; background: #fff; }
.score { margin-top: -19px; }
.score table { width: 323px; border-collapse: collapse; table-layout: fixed; }
.score td { padding: 0; border-bottom: 1px solid #dee2e6; white-space: nowrap; }
.score td:first-child { width: 199px; box-sizing: border-box; padding-left: 23px; }
.r1 { height: 43px; }
.r2 { height: 41px; }
.r3 { height: 39px; }
.r4 { height: 38px; }
.score .r2 td:last-child { padding-bottom: 8px; }
.score .r4 td { text-align: right; padding-right: 23px; border-bottom: 0; }
.badge {
  display: inline-block;
  margin-right: 5px;
  padding: 0 8px;
  border-radius: 4px;
  background: #54a651;
  color: #fff;
  font-weight: 700;
  line-height: 27px;
}
.muted { color: #6c757d; }
.foot { border-top: 2px solid #dfdfdf; background: #f7f7f7; padding: 13px 22px 12px 23px; display: flex; flex-direction: column; align-items: flex-start; }
.report { width: 206px; padding: 3px 0; }
.caret { display: inline-block; margin-left: 2px; }
.nav { display: flex; flex-direction: column; align-items: center; gap: 18px; margin: 28px 0; }
.nav .btn { height: 44px; padding: 0 15px; }
h3 { margin: 0; height: 54px; display: flex; align-items: center; gap: 6px; padding-left: 22px; background: #6d747c; color: #fff; font-size: 18px; font-weight: 500; border-bottom: 1px solid #5c636a; }
.notes p { padding: 8px 23px 6px; font-style: italic; }
.notes .btn { height: 32px; padding: 0 7px; }

/* dock */
.desktop {
  height: 110px;
  flex: none;
  box-sizing: border-box;
  padding: 12px 53px 11px;
  background: linear-gradient(#010409, #03101b);
}
.dock {
  height: 87px;
  box-sizing: border-box;
  padding: 0 3px;
  display: flex;
  border: 2px solid #3a424a;
  border-radius: 26px;
  background: #131a22;
}
.app { position: relative; flex: 1; display: flex; justify-content: center; padding-top: 9px; min-width: 0; }
.app > svg { width: 60px; height: 60px; }
.run::after, .stack::after {
  content: "";
  position: absolute;
  bottom: 2px;
  width: 8px;
  height: 8px;
  border-radius: 4px;
  background: #8f969e;
}
.stack::after { width: 66px; }
.split { width: 2px; height: 64px; margin: 10px 15px 0; background: #4d545c; }
.count {
  position: absolute;
  right: 2px;
  top: 5px;
  width: 25px;
  height: 25px;
  border-radius: 50%;
  background: #e24b3c;
  color: #fff;
  font-size: 15px;
  font-weight: 500;
  line-height: 25px;
  text-align: center;
}
.mini { align-items: center; padding: 0 0 10px; }
.mini > svg { width: 62px; height: auto; }
.mini > .chip { position: absolute; right: 3px; bottom: 14px; width: 23px; height: 23px; }
.trash { padding-top: 7px; }
.trash > svg { width: 48px; height: 64px; }
</style>
